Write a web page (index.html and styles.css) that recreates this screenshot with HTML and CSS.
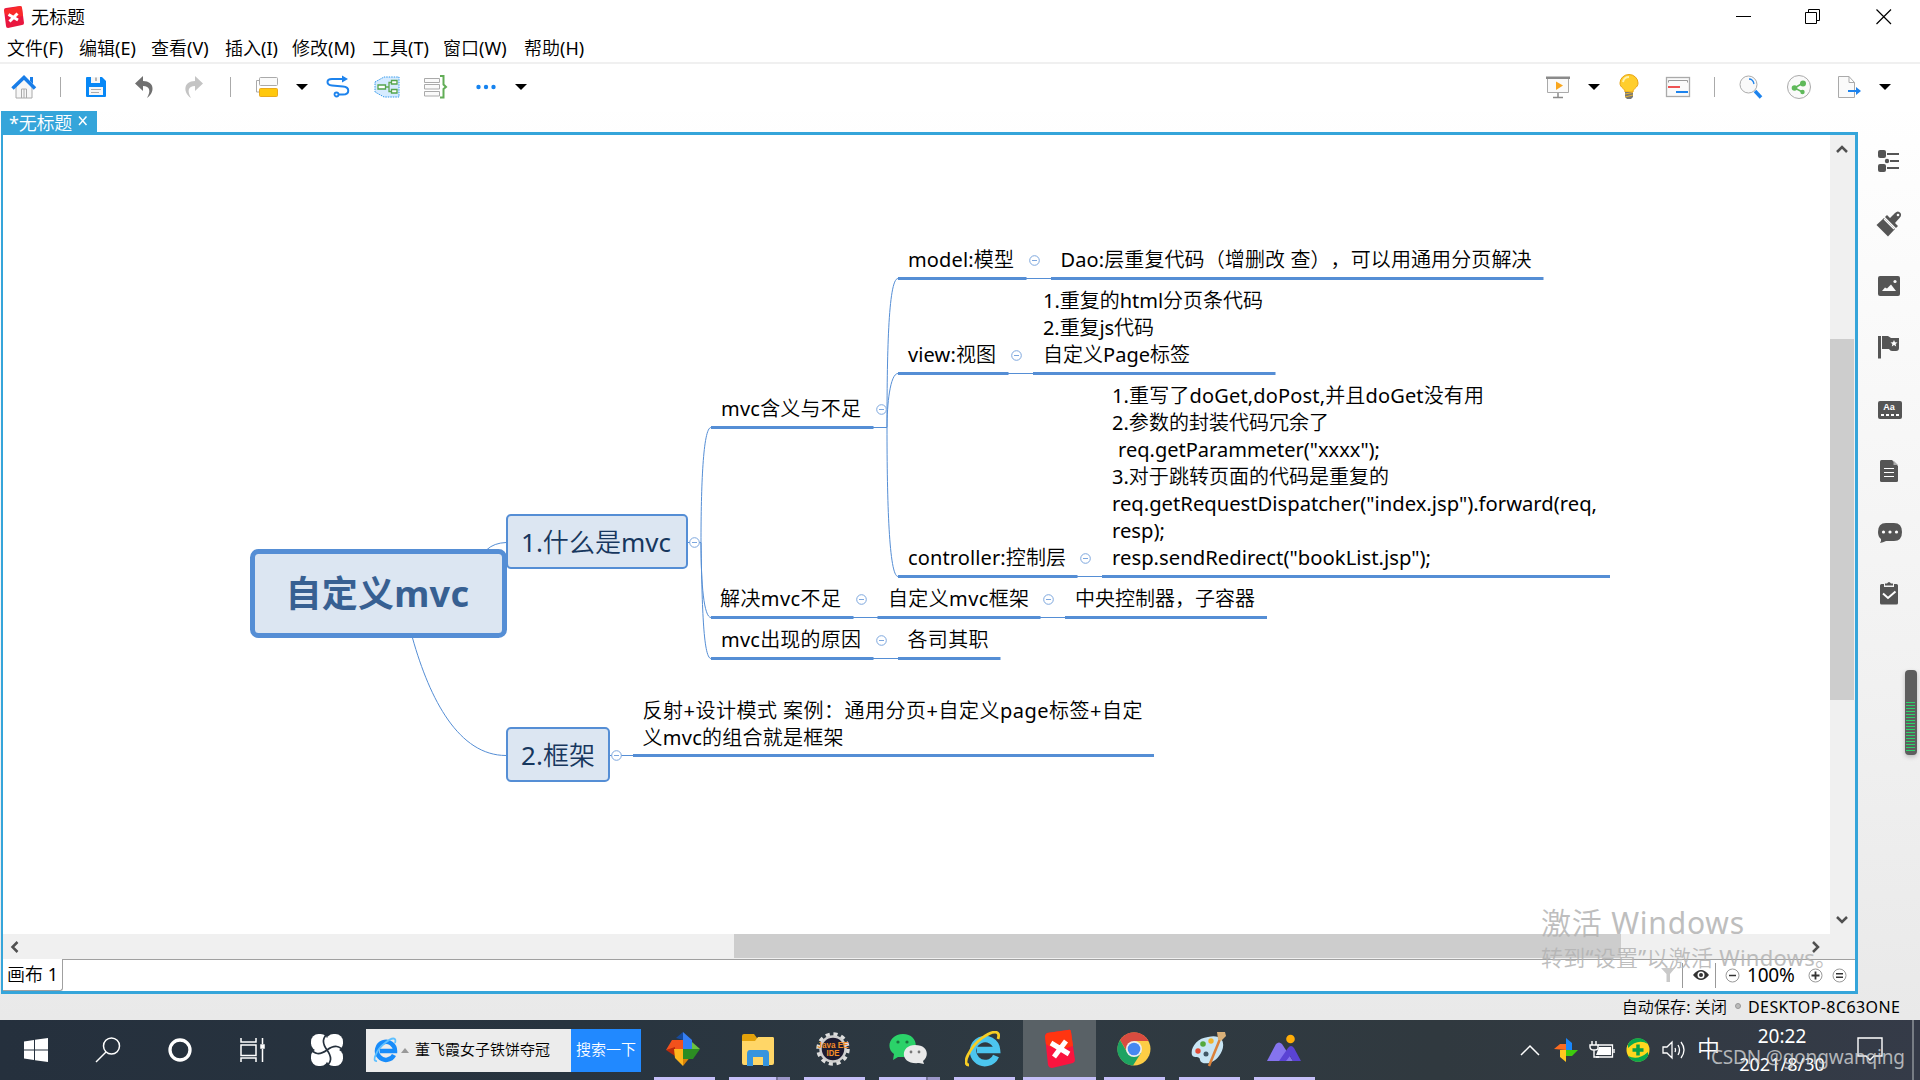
FILE: index.html
```html
<!DOCTYPE html>
<html lang="zh-CN">
<head>
<meta charset="utf-8">
<title>无标题</title>
<link rel="stylesheet" href="styles.css">
</head>
<body>
<div class="window">
  <header class="titlebar">
    <svg class="app-logo" width="22" height="22" viewBox="0 0 22 22"><path d="M1 4Q1 2 3 2L17 0Q19 0 19 2L21 17Q21 19 19 19L5 22Q3 22 3 20Z" fill="#e9173f"/><path d="M1 4L17 0Q19 0 19 2L20 10Q10 13 2 8Z" fill="#ff3223" opacity=".75"/><path d="M5.500 8.500L15 14M14.500 7.500L6.500 15.500" stroke="#fff" stroke-width="3"/></svg>
    <span class="title">无标题</span>
    <div class="win-controls">
      <svg width="16" height="16" viewBox="0 0 16 16"><path d="M0 7.500H15" stroke="#000"/></svg>
      <svg width="16" height="16" viewBox="0 0 16 16" fill="none" stroke="#000"><path d="M.5 3.500H11.500V14.500H.5ZM3.500 3.500V.5H14.500V11.500H11.500"/></svg>
      <svg width="16" height="16" viewBox="0 0 16 16"><path d="M.5 .5L15 15M15 .5L.5 15" stroke="#000" stroke-width="1.200"/></svg>
    </div>
  </header>
  <nav class="menubar">
    <span>文件(F)</span><span>编辑(E)</span><span>查看(V)</span><span>插入(I)</span><span>修改(M)</span><span>工具(T)</span><span>窗口(W)</span><span>帮助(H)</span>
  </nav>
  <div class="toolbar">
    <div class="tools tools-left">
      <svg width="26" height="24" viewBox="0 0 26 24"><path d="M5 12L13 4L21 12V23H5Z" fill="#f7f7f7" stroke="#aaa"/><path d="M10.500 23V14H15.500V23M13 14V23" fill="none" stroke="#aaa"/><path d="M1.500 13.500L13 2.500L24 13.500" fill="none" stroke="#187de8" stroke-width="3.500"/><path d="M19 2H22V9L19 6Z" fill="#187de8"/></svg>
      <i class="sep"></i>
      <svg width="22" height="22" viewBox="0 0 22 22"><path d="M1 2Q1 1 2 1H17L21 5V20Q21 21 20 21H2Q1 21 1 20Z" fill="#0787f6"/><path d="M6 1H15V7H6Z" fill="#f6f6f6"/><path d="M11 1.500V5" stroke="#777"/><path d="M4 11H18V19H4Z" fill="#f6f6f6"/><path d="M6 13.500H16M6 16.500H14" stroke="#aaa"/></svg>
      <svg width="22" height="24" viewBox="0 0 22 24"><path d="M9 1L1 8.500L9 16V11C16 11 17 16 13 23C21 18 21 6 9 6Z" fill="#707070"/></svg>
      <svg width="22" height="24" viewBox="0 0 22 24"><path d="M12 1L20 8.500L12 16V11C5 11 4 16 8 23C0 18 0 6 12 6Z" fill="#c4c4c4"/></svg>
      <i class="sep"></i>
      <svg width="24" height="22" viewBox="0 0 24 22"><path d="M5 4.500H1.500V16H5" fill="none" stroke="#aaa"/><rect x="4.500" y="1.500" width="18" height="8" rx="1" fill="#fafafa" stroke="#aaa"/><rect x="4.500" y="12.500" width="18" height="8" rx="1" fill="#ffc80c" stroke="#e9a91d"/></svg>
      <i class="drop"></i>
      <svg width="24" height="24" viewBox="0 0 24 24"><path d="M18 4H6C0 4 0 10 6 10.500L17 11.500C24 12 24 19.500 17 19.500H13" fill="none" stroke="#1d83ed" stroke-width="2"/><path d="M16 .5L22 4L16 7.500Z" fill="#1d83ed"/><circle cx="10.500" cy="19.500" r="2" fill="#fff" stroke="#1d83ed" stroke-width="1.800"/></svg>
      <svg width="26" height="22" viewBox="0 0 26 22"><path d="M1 6L10 1H25V21H10L1 16Z" fill="#d6ebff" stroke="#3298ec" stroke-dasharray="1.500 1"/><path d="M12 11H15V6.500H17M15 11V15.500H17" fill="none" stroke="#62a952" stroke-width="1.300"/><path d="M4 9H11.500V13H4ZM17.500 4.500H23V8H17.500ZM17.500 13.500H23V17H17.500Z" fill="#fff" stroke="#55a54d" stroke-width="1.300"/></svg>
      <svg width="26" height="26" viewBox="0 0 26 26"><path d="M1.500 4.500H16.500V8.500H1.500ZM1.500 10.500H16.500V15H1.500ZM1.500 17.500H16.500V22H1.500Z" fill="#fafafa" stroke="#aaa"/><path d="M17 2H20.500V10.500L23 13L20.500 15V23.500H17" fill="none" stroke="#62ad57" stroke-width="2"/></svg>
      <svg width="20" height="6" viewBox="0 0 20 6" fill="#1683ef"><circle cx="2.500" cy="3" r="2.200"/><circle cx="10" cy="3" r="2.200"/><circle cx="17.500" cy="3" r="2.200"/></svg>
      <i class="drop"></i>
    </div>
    <div class="tools tools-right">
      <svg width="26" height="24" viewBox="0 0 26 24"><path d="M2.500 3H23.500V17.500H2.500Z" fill="#fafafa" stroke="#aaa"/><path d="M1 1.500H25V4H1Z" fill="#8a8a8a"/><path d="M13 18V22.500M8 22.500H18" stroke="#8a8a8a" stroke-width="1.500"/><path d="M11 6.500L18 10.500L11 15Z" fill="#f9a61d"/></svg>
      <i class="drop"></i>
      <svg width="20" height="26" viewBox="0 0 20 26"><path d="M6 18C6 14 1 14 1 9A9 8.500 0 0 1 19 9C19 14 14 14 14 18Z" fill="#ffce2d" stroke="#e8a414"/><path d="M4 8Q5 3 10 3" fill="none" stroke="#fff1aa" stroke-width="2"/><path d="M6 18H14V23L12 25H8L6 23Z" fill="#777"/><path d="M6 20L14 18.500M6 23L14 21" stroke="#e8b52f"/></svg>
      <svg width="26" height="22" viewBox="0 0 26 22"><rect x="1.500" y="1.500" width="23" height="19" fill="#fafafa" stroke="#aaa" stroke-width="1.300"/><path d="M3.500 6.500V4.500H22.500V6.500" fill="none" stroke="#999"/><path d="M3 11H15" stroke="#ee5252" stroke-width="2"/><path d="M11 16H23" stroke="#1d83ed" stroke-width="2"/></svg>
      <i class="sep"></i>
      <svg width="24" height="24" viewBox="0 0 24 24"><circle cx="9.500" cy="9.500" r="8.500" fill="#f9f9f9" stroke="#aaa"/><path d="M10 4Q14 4 15 9" fill="none" stroke="#1d83ed" stroke-width="1.300"/><path d="M16 16L22 22.500" stroke="#1d83ed" stroke-width="3.500"/></svg>
      <svg width="26" height="26" viewBox="0 0 26 26"><circle cx="13" cy="13" r="11.500" fill="#fafafa" stroke="#aaa"/><path d="M17 9L8.500 14L16.500 18" fill="none" stroke="#5fb95a" stroke-width="1.500"/><circle cx="17" cy="9.500" r="3" fill="#5fb95a"/><circle cx="8.500" cy="14" r="2.800" fill="#5fb95a"/><circle cx="16.500" cy="18" r="2.200" fill="#5fb95a"/></svg>
      <svg width="24" height="24" viewBox="0 0 24 24"><path d="M1.500 1.500H12L17.500 7.500V22.500H1.500ZM12 1.500V7.500H17.500" fill="#fafafa" stroke="#aaa"/><path d="M11 16H20" stroke="#1d83ed" stroke-width="2"/><path d="M19 12L24 16L19 20Z" fill="#1d83ed"/></svg>
      <i class="drop"></i>
    </div>
  </div>
  <div class="tabs"><div class="tab"><span>*无标题</span><svg width="10" height="10" viewBox="0 0 10 10"><path d="M1 .5L8.500 9M8.500 .5L1 9" stroke="#fff" stroke-width="1.500"/></svg></div></div>
  <main class="workspace">
    <section class="editor">
      <div class="canvas-row">
        <svg class="map" width="1827" height="799" viewBox="3 135 1827 799">
          <defs><g id="fold"><circle r="4.800" fill="#fff" stroke="#7da7de"/><path d="M-2.500 0H2.500" stroke="#7da7de"/></g></defs>
          <g class="thin">
            <path d="M487 549.500Q494 543 506 542.500M412.500 638C430 700 459 755.500 506 755.500M688 542.500H701M610 755.500H633"/>
            <path d="M701 542.500C701 488 703 427.500 711 427.500M701 542.500C701 585 704 617.500 711 617.500M701 542.500C702 600 703 658.500 711 658.500"/>
            <path d="M873 427.500H887C887 360 888 278.500 898 278.500M887 427.500C887 405 890 373.500 898 373.500M887 427.500C887 500 889 576.500 898 576.500"/>
            <path d="M1026 278.500H1051M1008 373.500H1033M1077 576.500H1102M853 617.500H878M1040 617.500H1065M873 658.500H898"/>
          </g>
          <path class="rule" d="M711 427.500H873.500M898 278.500H1026.500M1051 278.500H1543.500M898 373.500H1008.500M1033 373.500H1275.500M898 576.500H1077.500M1102 576.500H1610M711 617.500H853.500M877.500 617.500H1040.500M1065 617.500H1267M711 658.500H873.500M898 658.500H1000.500M633 755.500H1154"/>
          <g><use href="#fold" x="694.500" y="542.500"/><use href="#fold" x="616.500" y="755.500"/><use href="#fold" x="881.500" y="409.500"/><use href="#fold" x="1034.500" y="260.500"/><use href="#fold" x="1016.500" y="355.500"/><use href="#fold" x="1085.500" y="558.500"/><use href="#fold" x="861.500" y="599.500"/><use href="#fold" x="1048.500" y="599.500"/><use href="#fold" x="881.500" y="640.500"/></g>
          <rect class="box" x="252.500" y="551.500" width="252" height="84" rx="6" stroke-width="5"/>
          <rect class="box" x="507" y="515" width="180" height="53" rx="4" stroke-width="2"/>
          <rect class="box" x="507" y="728" width="102" height="53" rx="4" stroke-width="2"/>
          <text class="root" x="285.500" y="607" textLength="183.500">自定义mvc</text>
          <text class="main" x="521" y="552" textLength="150">1.什么是mvc</text>
          <text class="main" x="521" y="765" textLength="74">2.框架</text>
          <g class="leaf">
            <text x="721" y="416" textLength="140">mvc含义与不足</text>
            <text x="908" y="267" textLength="106">model:模型</text>
            <text x="1060.500" y="267" textLength="471">Dao:层重复代码（增删改 查），可以用通用分页解决</text>
            <text x="1043" y="308" textLength="220">1.重复的html分页条代码</text>
            <text x="1043" y="335" textLength="111">2.重复js代码</text>
            <text x="908" y="362" textLength="88">view:视图</text>
            <text x="1043" y="362" textLength="147">自定义Page标签</text>
            <text x="1112" y="403" textLength="372">1.重写了doGet,doPost,并且doGet没有用</text>
            <text x="1112" y="430" textLength="217">2.参数的封装代码冗余了</text>
            <text x="1118" y="457" textLength="262" lengthAdjust="spacingAndGlyphs">req.getParammeter("xxxx");</text>
            <text x="1112" y="484" textLength="277">3.对于跳转页面的代码是重复的</text>
            <text x="1112" y="511" textLength="485" lengthAdjust="spacingAndGlyphs">req.getRequestDispatcher("index.jsp").forward(req,</text>
            <text x="1112" y="538" textLength="53" lengthAdjust="spacingAndGlyphs">resp);</text>
            <text x="1112" y="565" textLength="319" lengthAdjust="spacingAndGlyphs">resp.sendRedirect("bookList.jsp");</text>
            <text x="908" y="565" textLength="158">controller:控制层</text>
            <text x="720" y="606" textLength="121">解决mvc不足</text>
            <text x="888" y="606" textLength="141">自定义mvc框架</text>
            <text x="1075" y="606" textLength="180">中央控制器，子容器</text>
            <text x="721" y="647" textLength="140">mvc出现的原因</text>
            <text x="907.500" y="647" textLength="81">各司其职</text>
            <text x="642.500" y="717.500" textLength="500">反射+设计模式 案例：通用分页+自定义page标签+自定</text>
            <text x="642.500" y="744.500" textLength="201">义mvc的组合就是框架</text>
          </g>
        </svg>
        <div class="vscroll">
          <svg width="12" height="10" viewBox="0 0 12 10"><path d="M1 8L6 3L11 8" fill="none" stroke="#505050" stroke-width="2.500"/></svg>
          <div class="vthumb"></div>
          <svg width="12" height="10" viewBox="0 0 12 10"><path d="M1 2L6 7L11 2" fill="none" stroke="#505050" stroke-width="2.500"/></svg>
        </div>
      </div>
      <div class="hscroll">
        <svg width="10" height="12" viewBox="0 0 10 12"><path d="M7.500 1L2.500 6L7.500 11" fill="none" stroke="#505050" stroke-width="2.500"/></svg>
        <div class="hthumb"></div>
        <svg width="10" height="12" viewBox="0 0 10 12"><path d="M2 1L7 6L2 11" fill="none" stroke="#505050" stroke-width="2.500"/></svg>
      </div>
      <div class="sheetbar">
        <div class="sheet">画布 1</div>
        <div class="zoombar">
          <svg width="16" height="16" viewBox="0 0 16 16"><path d="M1 1H15L10 7V15H6.500V7Z" fill="#c9c9c9"/></svg>
          <i class="bar"></i>
          <svg width="18" height="12" viewBox="0 0 18 12"><path d="M1 6Q9-4 17 6Q9 16 1 6Z" fill="#333"/><circle cx="9" cy="6" r="3.500" fill="#fff"/><circle cx="9" cy="6" r="2" fill="#333"/></svg>
          <i class="bar"></i>
          <svg width="15" height="15" viewBox="0 0 15 15"><circle cx="7.500" cy="7.500" r="6.500" fill="#fff" stroke="#999"/><path d="M4 7.500H11" stroke="#333" stroke-width="1.500"/></svg>
          <span class="percent">100%</span>
          <svg width="15" height="15" viewBox="0 0 15 15"><circle cx="7.500" cy="7.500" r="6.500" fill="#fff" stroke="#999"/><path d="M3.500 7.500H11.500M7.500 3.500V11.500" stroke="#333" stroke-width="1.800"/></svg>
          <svg width="15" height="15" viewBox="0 0 15 15"><circle cx="7.500" cy="7.500" r="6.500" fill="#fff" stroke="#999"/><path d="M4 5.800H11M4 9.200H11" stroke="#333" stroke-width="1.600"/></svg>
        </div>
      </div>
    </section>
    <aside class="side">
      <div><svg width="26" height="24" viewBox="0 0 26 24" fill="#555"><rect x="2" y="0" width="8" height="8" rx="2"/><rect x="2" y="14" width="8" height="8" rx="2"/><circle cx="11" cy="11" r="2.200"/><path d="M11 3H23V5H11ZM14 10H23V12H14ZM11 17H23V19H11Z"/></svg></div>
      <div><svg width="26" height="26" viewBox="0 0 26 26" fill="#555"><path d="M.5 14L8 7L19 18L12 25.500Z"/><path d="M9 6L11 4L14 7L19 2Q22-1 24.500 2Q26 5 23.500 7L19 12L22 15L20 17Z"/><circle cx="22" cy="4" r="1.300" fill="#fafafa"/><path d="M8 8L18 18" stroke="#fafafa" stroke-width="1.300"/></svg></div>
      <div><svg width="24" height="22" viewBox="0 0 24 22"><rect x="1" y="2" width="22" height="20" rx="2" fill="#555"/><path d="M5 17L8 13.500L10 14.500L14 10.500L19 17Z" fill="#fafafa"/><circle cx="18" cy="7.500" r="1.600" fill="#fafafa"/></svg></div>
      <div><svg width="24" height="24" viewBox="0 0 24 24" fill="#555"><path d="M1 1H4V23.500H1ZM5 1H11L14 3H22V13Q22 16 19 16H15Q13 16 12 14H5Z"/><path d="M17 5L18 7.300L20.500 7.500L18.600 9L19.200 11.500L17 10L14.800 11.500L15.400 9L13.500 7.500L16 7.300Z" fill="#fff"/></svg></div>
      <div><svg width="26" height="20" viewBox="0 0 26 20"><rect x="2" y="2" width="24" height="18" rx="2" fill="#555"/><text class="aa" x="7.300" y="11.300">Aa</text><path d="M5 16H23" stroke="#fff" stroke-width="2" stroke-dasharray="3 2"/></svg></div>
      <div><svg width="20" height="24" viewBox="0 0 20 24"><path d="M1 2.500Q1 1 2.500 1H13L19 7V21.500Q19 23 17.500 23H2.500Q1 23 1 21.500Z" fill="#555"/><path d="M14.500 1.500V6H19Z" fill="#aaa"/><path d="M5 9.500H15M5 13.500H15M5 17.500H15" stroke="#fff" stroke-width="1.200"/></svg></div>
      <div><svg width="26" height="22" viewBox="0 0 26 22"><path d="M10 1H18Q26 1 26 10Q26 19 18 19H10Q7 20.500 4 21Q5.500 19 5 17Q2 15 2 10Q2 1 10 1Z" fill="#555"/><g fill="#fff"><circle cx="7.500" cy="10" r="1.600"/><circle cx="14" cy="10" r="1.600"/><circle cx="20.500" cy="10" r="1.600"/></g></svg></div>
      <div><svg width="20" height="26" viewBox="0 0 20 26"><path d="M1 4.500Q1 3 2.500 3H5V6H15V3H17.500Q19 3 19 4.500V22Q19 23.500 17.500 23.500H2.500Q1 23.500 1 22Z" fill="#555"/><path d="M6 4.500V2.500H8Q10-.5 12 2.500H14V4.500Z" fill="#555"/><path d="M4 12.500L9 17L16.500 10.500" fill="none" stroke="#fff" stroke-width="2"/></svg></div>
    </aside>
  </main>
  <footer class="statusbar"><span class="autosave">自动保存: 关闭</span><i class="dot"></i><span class="host">DESKTOP-8C63ONE</span></footer>
</div>
<div class="taskbar">
  <div class="cell"><svg width="24" height="24" viewBox="0 0 24 24" fill="#fff"><path d="M0 3.500L10 2V11.500H0ZM11 1.800L24 0V11.500H11ZM0 12.500H10V22L0 20.500ZM11 12.500H24V24L11 22.200Z"/></svg></div>
  <div class="cell"><svg width="26" height="26" viewBox="0 0 26 26" fill="none" stroke="#fff" stroke-width="1.500"><circle cx="16.500" cy="9" r="8"/><path d="M11 15L1 25"/></svg></div>
  <div class="cell"><svg width="26" height="26" viewBox="0 0 26 26"><circle cx="13" cy="13" r="10" fill="none" stroke="#fff" stroke-width="3.300"/></svg></div>
  <div class="cell"><svg width="25" height="24" viewBox="0 0 25 24" fill="none" stroke="#fff" stroke-width="1.500"><path d="M1 0V4H16V0M1 7H16V17.500H1ZM1 24V20H16V24M22.500 0V6M22.500 11V24"/><path d="M21 7H24V10H21Z" fill="#fff"/></svg></div>
  <div class="cell knot"><svg width="34" height="34" viewBox="0 0 34 34"><g fill="#fff"><rect x="1" y="1" width="17" height="17" rx="7.500"/><rect x="16" y="1" width="17" height="17" rx="7.500"/><rect x="1" y="16" width="17" height="17" rx="7.500"/><rect x="16" y="16" width="17" height="17" rx="7.500"/><rect x="11" y="11" width="12" height="12"/></g><g fill="none" stroke="#26313d" stroke-width="1.700"><path id="swirl" d="M19 0Q9 6 17 17"/><use href="#swirl" transform="rotate(90 17 17)"/><use href="#swirl" transform="rotate(180 17 17)"/><use href="#swirl" transform="rotate(270 17 17)"/></g></svg></div>
  <div class="search">
    <svg width="25" height="26" viewBox="0 0 25 26"><path d="M21 18A9 9 0 1 1 22 14H7" fill="none" stroke="#188cfa" stroke-width="4.500"/><path d="M4 24C-2 25 4 12 12 6C19 0 24 0 22 6" fill="none" stroke="#5ec0ff" stroke-width="1.800"/></svg>
    <i class="up"></i><span class="query">董飞霞女子铁饼夺冠</span><span class="go">搜索一下</span>
  </div>
  <div class="apps">
    <div class="app"><svg width="34" height="34" viewBox="0 0 34 34"><path d="M17 0L26 8V17H17Z" fill="#347ef4"/><path d="M17 0V8L10 6Z" fill="#174a9b"/><path d="M0 18L6 8H17V17Z" fill="#f2511c"/><path d="M0 18L9 15V24Z" fill="#b72b0c"/><path d="M8 17H17V34L9 26Z" fill="#ffb51d"/><path d="M17 34V26L25 24Z" fill="#d98308"/><path d="M17 17H26L34 17L27 27H17Z" fill="#2c8c22"/><path d="M26 10L34 17H26Z" fill="#6bc33f"/></svg></div>
    <div class="app grouped"><svg width="34" height="34" viewBox="0 -3 34 34"><path d="M1 1Q1-1 3-1H13L16 3H33V27H1Z" fill="#e3a20b"/><path d="M1 6H14L17 2H32Q33 2 33 4V28Q33 30 31 30H3Q1 30 1 28Z" fill="#ffd667"/><path d="M6 31V19Q6 15 9 15H25Q28 15 28 19V31H22V22H12V31Z" fill="#3694de"/></svg></div>
    <div class="app"><svg width="34" height="34" viewBox="0 0 34 34"><circle cx="17" cy="17" r="14.500" fill="none" stroke="#ddd" stroke-width="4.500" stroke-dasharray="4 3.590"/><circle cx="17" cy="17" r="12.500" fill="#1d1b30" stroke="#cfcfcf" stroke-width="2.500"/><text class="java" x="1.500" y="15.500" textLength="31" lengthAdjust="spacingAndGlyphs">Java EE</text><text class="java" x="10.500" y="24" textLength="13" lengthAdjust="spacingAndGlyphs">IDE</text></svg></div>
    <div class="app grouped"><svg width="38" height="32" viewBox="0 0 38 32"><path d="M14 1C31 1 31 23 14 24L9 24L4 27L5 21C-4 15 1 1 14 1Z" fill="#2bd269"/><circle cx="9" cy="9" r="1.600" fill="#19753f"/><circle cx="18" cy="9" r="1.600" fill="#19753f"/><path d="M26 12C40 12 40 24 34 28L35 31L30 30C10 32 11 12 26 12Z" fill="#e9e9e9"/><circle cx="22" cy="19" r="1.400" fill="#777"/><circle cx="30" cy="19" r="1.400" fill="#777"/></svg></div>
    <div class="app"><svg width="36" height="36" viewBox="0 0 36 36"><path d="M31 25A12 12 0 1 1 32 19H12" fill="none" stroke="#4cc5ef" stroke-width="6.500"/><path d="M4 34C-4 34 5 16 17 7C28-1 36-1 33 8" fill="none" stroke="#f7cd24" stroke-width="2.800"/></svg></div>
    <div class="app active"><svg width="32" height="40" viewBox="0 0 32 40" preserveAspectRatio="none"><path d="M1 7Q1 5 3 4L24 1Q27 0 27 3L31 31Q31 33 29 34L8 39Q5 39 4 36Z" fill="#fa143f"/><path d="M1 7L3 4L24 1Q27 0 27 3L29 17Q12 23 2 15Z" fill="#ff3510"/><path d="M7 14L25 25M22 12L10 28" stroke="#fff" stroke-width="5"/></svg></div>
    <div class="app"><svg width="34" height="34" viewBox="0 0 34 34"><circle cx="17" cy="17" r="16.500" fill="#fdcd45"/><path d="M17 17H8.500L3 8A16.500 16.500 0 0 1 31.500 9H17Z" fill="#d94c40"/><path d="M3 8A16.500 16.500 0 0 0 16 33.500L24 21H17L10 20Z" fill="#1da362"/><circle cx="17" cy="17" r="8" fill="#eee"/><circle cx="17" cy="17" r="6.300" fill="#4688f1"/></svg></div>
    <div class="app"><svg width="36" height="36" viewBox="0 0 36 36"><path d="M17 6C36 2 34 18 28 25C22 34 10 34 9 29C9 24 3 28 1 24C-1 17 6 7 17 6Z" fill="#c8e5f4"/><circle cx="15" cy="23" r="2.500" fill="#415866"/><circle cx="7" cy="20" r="2.700" fill="#e34b35"/><circle cx="12" cy="13" r="2.800" fill="#54a93c"/><circle cx="20" cy="10" r="2.700" fill="#f1b32b"/><path d="M18 35L29 8" stroke="#da813a" stroke-width="2.500"/><path d="M27 8L26 1L34 1L35 5L30 10Z" fill="#d9b078"/></svg></div>
    <div class="app"><svg width="36" height="34" viewBox="0 0 36 34"><circle cx="24.500" cy="7" r="4.300" fill="#ffad08"/><path d="M1 29L10 12Q13 9 16 12L27 29Z" fill="#8574ee"/><path d="M13 29L22 16Q25 12 28 16L35 29H27L24 24L20 29Z" fill="#5a43d4"/></svg></div>
  </div>
  <div class="tray">
    <svg width="20" height="12" viewBox="0 0 20 12"><path d="M1 11L10 2L19 11" fill="none" stroke="#fff" stroke-width="1.500"/></svg>
    <svg width="24" height="24" viewBox="0 0 24 24"><path d="M12 0L18 5V12H12Z" fill="#1987fb"/><path d="M0 11L6 6H12V12Z" fill="#fb6b21"/><path d="M6 12H12V24L6 19Z" fill="#ffc71f"/><path d="M12 12H24L18 18H12Z" fill="#3ecb0d"/></svg>
    <svg width="26" height="20" viewBox="0 0 26 20"><path d="M9 5H23.500V17H7" fill="none" stroke="#fff" stroke-width="1.300"/><path d="M10 7H22V15H7Z" fill="#fff"/><path d="M25 9V13M3 1V5M7 1V5M1 5H9V8Q9 10 5 10Q1 10 1 7ZM5 10V17H10" fill="none" stroke="#fff" stroke-width="1.400"/></svg>
    <svg width="24" height="24" viewBox="0 0 24 24"><circle cx="12" cy="12" r="11.500" fill="#ffd71e"/><path d="M2 6A11.500 11.500 0 0 1 22 6Q12 0 2 10ZM22 18A11.500 11.500 0 0 1 2 18Q12 23 22 14Z" fill="#0aa84c"/><path d="M12 6.500V17.500M6.500 12H17.500" stroke="#089f48" stroke-width="3.500"/></svg>
    <svg width="24" height="20" viewBox="0 0 24 20" fill="none" stroke="#fff" stroke-width="1.300"><path d="M1 7H5L10 2V18L5 13H1ZM13 8Q14 10 13 12M16 5Q19 10 16 15M19 2Q25 10 19 18"/></svg>
    <span class="ime">中</span>
    <div class="clock"><span>20:22</span><span>2021/8/30</span></div>
    <svg width="26" height="26" viewBox="0 0 26 26"><path d="M1 1H25V19H17L13 23L9 19H1Z" fill="none" stroke="#fff" stroke-width="1.400"/></svg>
    <i class="peek"></i>
  </div>
</div>
<div class="meter"><i></i></div>
<svg class="activate" width="310" height="80" viewBox="0 0 310 80"><text class="big" x="0" y="32" textLength="203">激活 Windows</text><text class="small" x="0" y="64" textLength="296">转到“设置”以激活 Windows。</text></svg>
<svg class="credit" width="210" height="33" viewBox="0 0 210 33"><text x="1" y="24" textLength="194">CSDN @gongwanqing</text></svg>
</body>
</html>
```
FILE: styles.css
```css
* { box-sizing: border-box; }
body {
  margin: 0;
  width: 1920px;
  height: 1080px;
  overflow: hidden;
  position: relative;
  font-family: "Noto Sans", "Noto Sans CJK SC DemiLight", "Noto Sans CJK SC", sans-serif;
  font-size: 18px;
  color: #000;
  text-spacing-trim: space-all;
}
svg { display: block; flex: none; }
.window {
  height: 1020px;
  display: flex;
  flex-direction: column;
  background: linear-gradient(#fff 100px, #e9e9e9 1020px);
}
.titlebar { height: 34px; background: #fff; display: flex; align-items: center; padding-left: 3px; }
.title { margin: 0 auto 0 6px; line-height: 35px; }
.win-controls { display: flex; gap: 55px; padding-right: 28px; }
.win-controls svg:first-child { margin-right: -2px; }
.menubar { height: 28px; background: #fff; display: grid; grid-template-columns: 72px 72px 74px 67px 80px 71px 81px 80px; padding-left: 7px; line-height: 28px; white-space: nowrap; }
.toolbar { height: 49px; border-top: 2px solid #f0f0f0; background: #fff; display: flex; justify-content: space-between; }
.tools { display: grid; align-items: center; justify-items: center; height: 46px; }
.tools-left { grid-template-columns: 48px 24px 48px 50px 48px 24px 50px 20px 52px 46px 52px 48px 22px; }
.tools-right { grid-template-columns: 50px 21px 50px 48px 24px 49px 48px 52px 19px; margin-right: 26px; }
.sep { width: 1px; height: 20px; background: #aaa; }
.drop { border: 6px solid transparent; border-top-color: #000; border-bottom: 0; }
.tabs { height: 21px; padding-left: 1px; display: flex; }
.tab { width: 96px; background: #35a5da; color: #fff; display: flex; align-items: center; padding-left: 8px; gap: 6px; line-height: 24px; letter-spacing: -.2px; white-space: nowrap; }
.tab span { padding-top: 3px; }
.tab svg { margin-top: -1px; }
.workspace { height: 862px; display: flex; padding-left: 1px; }
.editor { width: 1857px; border: 3px solid #35a5da; border-left-width: 2px; background: #fff; display: flex; flex-direction: column; }
.canvas-row { display: flex; height: 799px; }
.vscroll { width: 25px; background: #f0f0f0; display: flex; flex-direction: column; align-items: center; justify-content: space-between; padding: 9px 1px 9px 0; }
.vthumb { width: 24px; height: 361px; background: #cdcdcd; margin-bottom: 30px; }
.hscroll { height: 25px; background: #f0f0f0; display: flex; align-items: center; padding: 0 34px 0 7px; }
.hthumb { width: 887px; height: 24px; background: #cdcdcd; margin: 0 auto 1px 714px; }
.sheetbar { height: 32px; display: flex; }
.sheet { width: 60px; border-right: 1px solid #a0a0a0; border-bottom: 1px solid #a0a0a0; border-bottom-right-radius: 3px; padding-left: 4px; line-height: 31px; white-space: nowrap; }
.zoombar { flex: 1; border-top: 1px solid #a0a0a0; display: flex; align-items: center; justify-content: flex-end; padding: 0 8px 1px 0; }
.bar { width: 1px; height: 25px; background: #999; margin-left: 6px; }
.bar + svg { margin-left: 9px; }
.bar + svg + .bar { margin-left: 5px; }
.bar + svg + .percent { margin-left: 7px; width: 61px; font-size: 19px; letter-spacing: -.2px; }
.percent + svg { margin-right: 9px; }
.side { flex: 1; display: grid; grid-auto-rows: 61.800px; align-content: start; justify-items: center; margin-top: -1px; }
.side div { display: grid; place-items: center; }
.aa { font: bold 9px "Liberation Sans", sans-serif; fill: #fff; }
.statusbar { height: 26px; display: flex; align-items: center; justify-content: flex-end; padding-right: 20px; font-size: 16px; line-height: 26px; white-space: nowrap; }
.autosave { letter-spacing: .1px; }
.dot { width: 6px; height: 6px; border-radius: 50%; background: #bbb; border: 1px solid #999; margin: 0 8px 3px 9px; }
.statusbar .dot { margin-left: 8px; margin-right: 7px; }
.host { width: 152px; letter-spacing: .4px; }

.thin { fill: none; stroke: #558ed5; stroke-width: 1; }
.rule { fill: none; stroke: #558ed5; stroke-width: 3; }
.box { fill: #dce6f2; stroke: #558ed5; }
.leaf { font-size: 20px; }
.main { font-size: 26px; fill: #17375e; }
.root { font-family: "Noto Sans", "Noto Sans CJK SC", sans-serif; font-size: 36px; font-weight: bold; fill: #376092; }

.taskbar { height: 60px; display: flex; align-items: center; background: linear-gradient(90deg, #25303d, #28343f 30%, #2f3a42 55%, #30393f 75%, #353b48); }
.cell { flex: none; width: 72px; display: grid; place-items: center; }
.cell.knot { width: 78px; }
.search { flex: none; width: 275px; height: 43px; background: #ececec; display: flex; align-items: center; font-size: 15px; padding-left: 7px; white-space: nowrap; }
.up { border: 4px solid transparent; border-bottom: 5px solid #999; border-top: 0; margin: 0 6px 0 3px; }
.query { flex: 1; line-height: 40px; padding-bottom: 2px; }
.go { width: 70px; height: 43px; line-height: 41px; text-align: center; background: #2189ff; color: #fff; }
.apps { flex: none; display: flex; gap: 2px; margin-left: 7px; height: 60px; }
.app { width: 73px; display: grid; place-items: center; position: relative; padding: 0 3px 2px 0; }
.app::after { content: ""; position: absolute; left: 6px; bottom: 0; width: 61px; height: 3px; background: #c5bff8; }
.app.grouped::after { background: linear-gradient(90deg, #c5bff8 47px, #77739b 47px 49px, #9b96c8 49px); }
.app.active { background: #596166; padding-right: 0; }
.app.active::after { left: 0; width: 73px; }
.app.active ~ .app { padding-right: 1px; }
.java { font: bold 8.500px "Liberation Sans", sans-serif; fill: #f58e28; }
.tray { flex: 1; height: 60px; margin-left: 191px; display: grid; grid-template-columns: 36px 36px 36px 35px 37px 33px 114px 62px 1fr; align-items: center; justify-items: center; color: #fff; }
.ime { font-size: 23px; line-height: 30px; margin-top: -4px; }
.clock { display: flex; flex-direction: column; align-items: center; font-size: 19px; line-height: 28px; margin-top: -1px; }
.clock span + span { font-size: 18px; }
.peek { width: 2px; height: 60px; background: #777d84; justify-self: end; margin-right: 6px; }

.meter { position: absolute; left: 1905px; top: 670px; width: 12px; height: 85px; padding: 32px 2px 2px 1px; border-radius: 4px; background: #5e5e5e; box-shadow: 0 2px 4px #bbb; }
.meter i { display: block; height: 51px; background: repeating-linear-gradient(#2bd36a 0 1px, #5e5e5e 1px 3px); }
.activate { position: absolute; left: 1541px; top: 902px; fill: #b3b3b3; opacity: .85; }
.big { font-size: 30px; }
.small { font-size: 22px; }
.credit { position: absolute; left: 1710px; top: 1040px; fill: #d2d4d6; opacity: .8; font-size: 19px; }
```
